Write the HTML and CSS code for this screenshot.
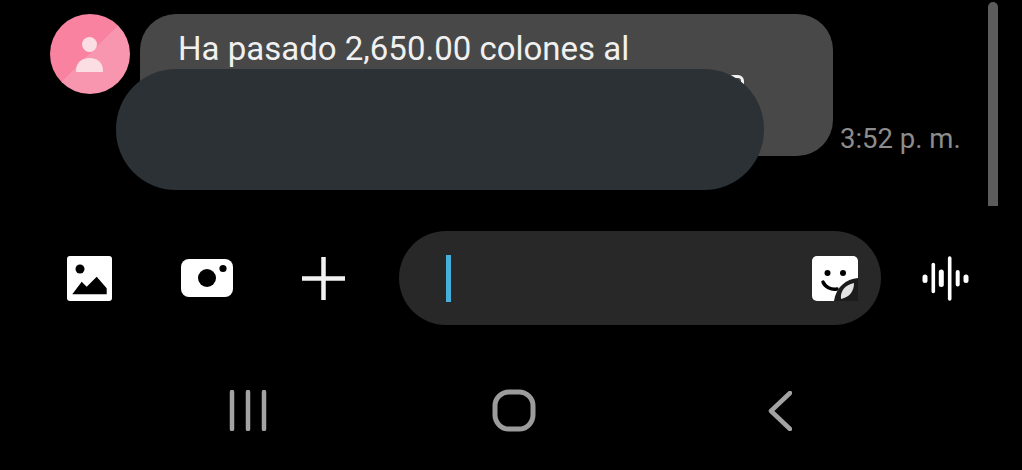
FILE: index.html
```html
<!DOCTYPE html>
<html>
  <head>
    <meta charset="UTF-8" />
    <title>Mensajes</title>
    <link rel="stylesheet" href="styles.css">
  </head>
  <body>
    <div id="screen">
      <div class="thread">
        <div class="avatar">
          <svg width="80" height="80" viewBox="0 0 80 80">
            <circle cx="39.5" cy="30.5" r="7.5" fill="#fbdde4" />
            <path d="M26 57c0-9 6-13 13.5-13S53 48 53 57c0 .6-.4 1-1 1H27c-.6 0-1-.4-1-1z" fill="#fbdde4" />
          </svg>
        </div>
        <div class="bubble">
          <div class="bubble-text">Ha pasado 2,650.00 colones al</div>
          <div class="bubble-more"><span class="inline-icon"></span></div>
        </div>
        <div class="time">3:52 p. m.</div>
      </div>
      <div class="redaction"></div>
      <div class="scrollbar"></div>

      <div class="composer">
        <button class="icon-btn" aria-label="Galería">
          <svg width="45" height="45" viewBox="0 0 45 45">
            <rect width="45" height="45" rx="3" fill="#fff" />
            <circle cx="13" cy="13" r="4.5" fill="#000" />
            <path d="M5.3 38.3 14.7 25.7l5 5 10-10L39.7 32.3v6z" fill="#000" />
          </svg>
        </button>
        <button class="icon-btn" aria-label="Cámara">
          <svg width="52" height="38" viewBox="0 0 52 38">
            <rect width="52" height="38" rx="8" fill="#fff" />
            <circle cx="26" cy="19" r="9" fill="#000" />
            <circle cx="42" cy="9.5" r="3.6" fill="#000" />
          </svg>
        </button>
        <button class="icon-btn" aria-label="Más">
          <svg width="43" height="43" viewBox="0 0 43 43">
            <path d="M21.5 0v43M0 21.5h43" stroke="#f2f2f2" stroke-width="4.5" />
          </svg>
        </button>
        <div class="field">
          <span class="caret"></span>
          <svg class="sticker" width="46" height="45" viewBox="0 0 46 45">
            <rect width="46" height="45" rx="5" fill="#fff" />
            <circle cx="15.5" cy="17" r="3" fill="#000" />
            <circle cx="31" cy="17" r="3" fill="#000" />
            <path d="M11 26c2 5 8 8 14 7" fill="none" stroke="#000" stroke-width="3.4" stroke-linecap="round" />
            <path d="M46 22C34 23 24 31 22 45h24z" fill="#1c1c1c" />
            <path d="M29 43c-1-8 4-14 13-16 0 8-4 14-13 16z" fill="#e4e4e4" />
          </svg>
        </div>
        <button class="icon-btn voice" aria-label="Voz">
          <svg width="47" height="45" viewBox="0 0 47 45">
            <g stroke="#fff" stroke-linecap="round">
              <path d="M3 21v3.5" stroke-width="5" />
              <path d="M11.3 8.5v27" stroke-width="3.6" />
              <path d="M19.3 16v12.5" stroke-width="5" />
              <path d="M27.7 2v41" stroke-width="3.6" />
              <path d="M35.7 16v12.5" stroke-width="4" />
              <path d="M44 21v3.5" stroke-width="5" />
            </g>
          </svg>
        </button>
      </div>

      <div class="navbar">
        <div class="nav-item">
          <svg width="38" height="41" viewBox="0 0 38 41">
            <path d="M3 2v37M19 2v37M35 2v37" stroke="#a3a3a3" stroke-width="4.5" stroke-linecap="round" />
          </svg>
        </div>
        <div class="nav-item">
          <svg width="44" height="43" viewBox="0 0 44 43">
            <rect x="3" y="3" width="38" height="37" rx="14" fill="none" stroke="#9c9c9c" stroke-width="5" />
          </svg>
        </div>
        <div class="nav-item">
          <svg width="24" height="40" viewBox="0 0 24 40">
            <path d="M22 2 3 20l19 18" fill="none" stroke="#a3a3a3" stroke-width="4.5" stroke-linecap="round" stroke-linejoin="round" />
          </svg>
        </div>
      </div>
    </div>
  </body>
</html>
```

FILE: styles.css
```css
:root {
  --bubble: #484848;
  --field: #282828;
  --redact: #2b3135;
  --font: Roboto, "Liberation Sans", sans-serif;
}
html,
body {
  margin: 0;
  height: 100%;
  background: #000;
  overflow: hidden;
  font-family: var(--font);
}
#screen {
  position: relative;
  width: 1022px;
  height: 470px;
}
.thread {
  display: flex;
  height: 142px;
  padding: 14px 0 0 50px;
}
.avatar {
  flex: none;
  width: 80px;
  height: 80px;
  margin-right: 10px;
  border-radius: 50%;
  background: linear-gradient(135deg, #f8829f 0%, #f8829f 50%, #f796ae 50%, #f796ae 100%);
}
.bubble {
  flex: none;
  width: 693px;
  height: 142px;
  box-sizing: border-box;
  padding: 16px 89px 0 38px;
  border-radius: 36px;
  background: var(--bubble);
}
.bubble-text {
  color: #f0f0f0;
  font-size: 33px;
  line-height: 38px;
  white-space: nowrap;
}
.bubble-more {
  display: flex;
  justify-content: flex-end;
  margin-top: 7px;
}
.inline-icon {
  width: 17px;
  height: 24px;
  box-sizing: border-box;
  border: 3px solid #f2f2f2;
  border-radius: 6px;
}
.time {
  align-self: flex-end;
  margin: 0 0 2px 7px;
  color: #8c8c8c;
  font-size: 27.5px;
  line-height: 30px;
  white-space: nowrap;
}
.redaction {
  position: absolute;
  left: 116px;
  top: 69px;
  width: 648px;
  height: 121px;
  border-radius: 60px;
  background: var(--redact);
}
.scrollbar {
  position: absolute;
  left: 988px;
  top: 2px;
  width: 10px;
  height: 204px;
  border-radius: 5px 5px 0 0;
  background: #5c5c5c;
}
.composer {
  display: flex;
  align-items: center;
  height: 94px;
  margin-top: 75px;
  padding-left: 67px;
}
.icon-btn {
  display: flex;
  flex: none;
  margin: 0 69px 0 0;
  padding: 0;
  border: none;
  background: none;
}
.field {
  display: flex;
  flex: none;
  align-items: center;
  justify-content: space-between;
  box-sizing: border-box;
  width: 482px;
  height: 94px;
  margin: 0 41px 0 -15px;
  padding: 0 23px 0 47px;
  border-radius: 47px;
  background: var(--field);
}
.caret {
  width: 5px;
  height: 47px;
  background: #45b0dc;
}
.voice {
  margin-right: 0;
}
.navbar {
  display: grid;
  grid-template-columns: repeat(3, 266px);
  margin-top: 64px;
  padding-left: 115px;
}
.nav-item {
  display: flex;
  align-items: center;
  justify-content: center;
  height: 43px;
}
```
